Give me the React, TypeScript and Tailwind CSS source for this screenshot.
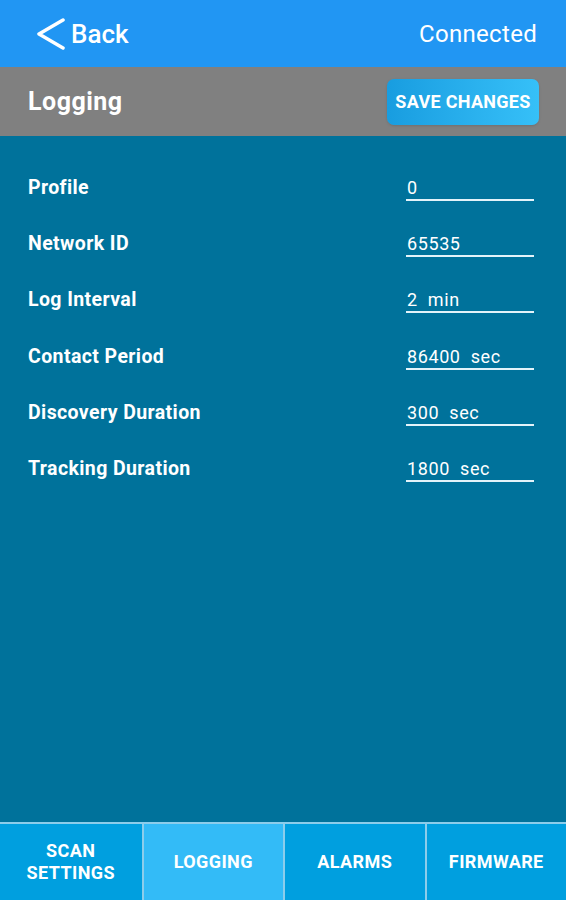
import React from 'react';

const fields = [
  { label: 'Profile', value: '0' },
  { label: 'Network ID', value: '65535' },
  { label: 'Log Interval', value: '2  min' },
  { label: 'Contact Period', value: '86400  sec' },
  { label: 'Discovery Duration', value: '300  sec' },
  { label: 'Tracking Duration', value: '1800  sec' },
];

const tabs = ['SCAN\nSETTINGS', 'LOGGING', 'ALARMS', 'FIRMWARE'];

export default function App() {
  return (
    <div className="h-screen w-full flex flex-col bg-[#00729b] text-white font-['Roboto',sans-serif]">
      {/* top bar */}
      <div className="h-[67px] shrink-0 bg-[#2196f3] flex items-center justify-between pl-[37px] pr-[29px]">
        <div className="flex items-center gap-[6px]">
          <svg width="28" height="32" viewBox="0 0 28 32" fill="none">
            <polyline points="26,2 2,16 26,30" stroke="white" strokeWidth="3.5" strokeLinecap="round" strokeLinejoin="round" />
          </svg>
          <span className="text-[26px] font-medium leading-none">Back</span>
        </div>
        <span className="text-[24px] tracking-[0.3px] leading-none">Connected</span>
      </div>

      {/* section header */}
      <div className="h-[69px] shrink-0 bg-[#808080] flex items-center justify-between pl-[28px] pr-[27px]">
        <span className="text-[25px] tracking-[0.5px] font-bold">Logging</span>
        <button className="h-[46px] w-[152px] rounded-[7px] bg-gradient-to-r from-[#189de0] to-[#36c0f8] text-[18px] tracking-[0.3px] font-bold shadow-sm">
          SAVE CHANGES
        </button>
      </div>

      {/* fields */}
      <div className="flex-1 pt-[24px]">
        {fields.map((f) => (
          <div key={f.label} className="h-[56.2px] flex items-center justify-between pl-[28px] pr-[32px]">
            <span className="text-[19.5px] tracking-[0.4px] font-bold leading-[24px]">{f.label}</span>
            <div className="w-[128px] mt-[2px] border-b-2 border-[#e3f3fa] text-[18px] tracking-[0.6px] leading-[22px] whitespace-pre pl-[1px]">
              {f.value}
            </div>
          </div>
        ))}
      </div>

      {/* tabs */}
      <div className="h-[78px] shrink-0 border-t-2 border-[#8ccdeb] grid grid-cols-4 bg-[#009fdf]">
        {tabs.map((t, i) => (
          <div
            key={t}
            className={`flex items-center justify-center text-center whitespace-pre-line text-[18px] tracking-[0.4px] font-bold leading-[22px] ${
              i > 0 ? 'border-l-2 border-[#8ccdeb]' : ''
            } ${i === 1 ? 'bg-[#33bbf7]' : ''}`}
          >
            {t}
          </div>
        ))}
      </div>
    </div>
  );
}
